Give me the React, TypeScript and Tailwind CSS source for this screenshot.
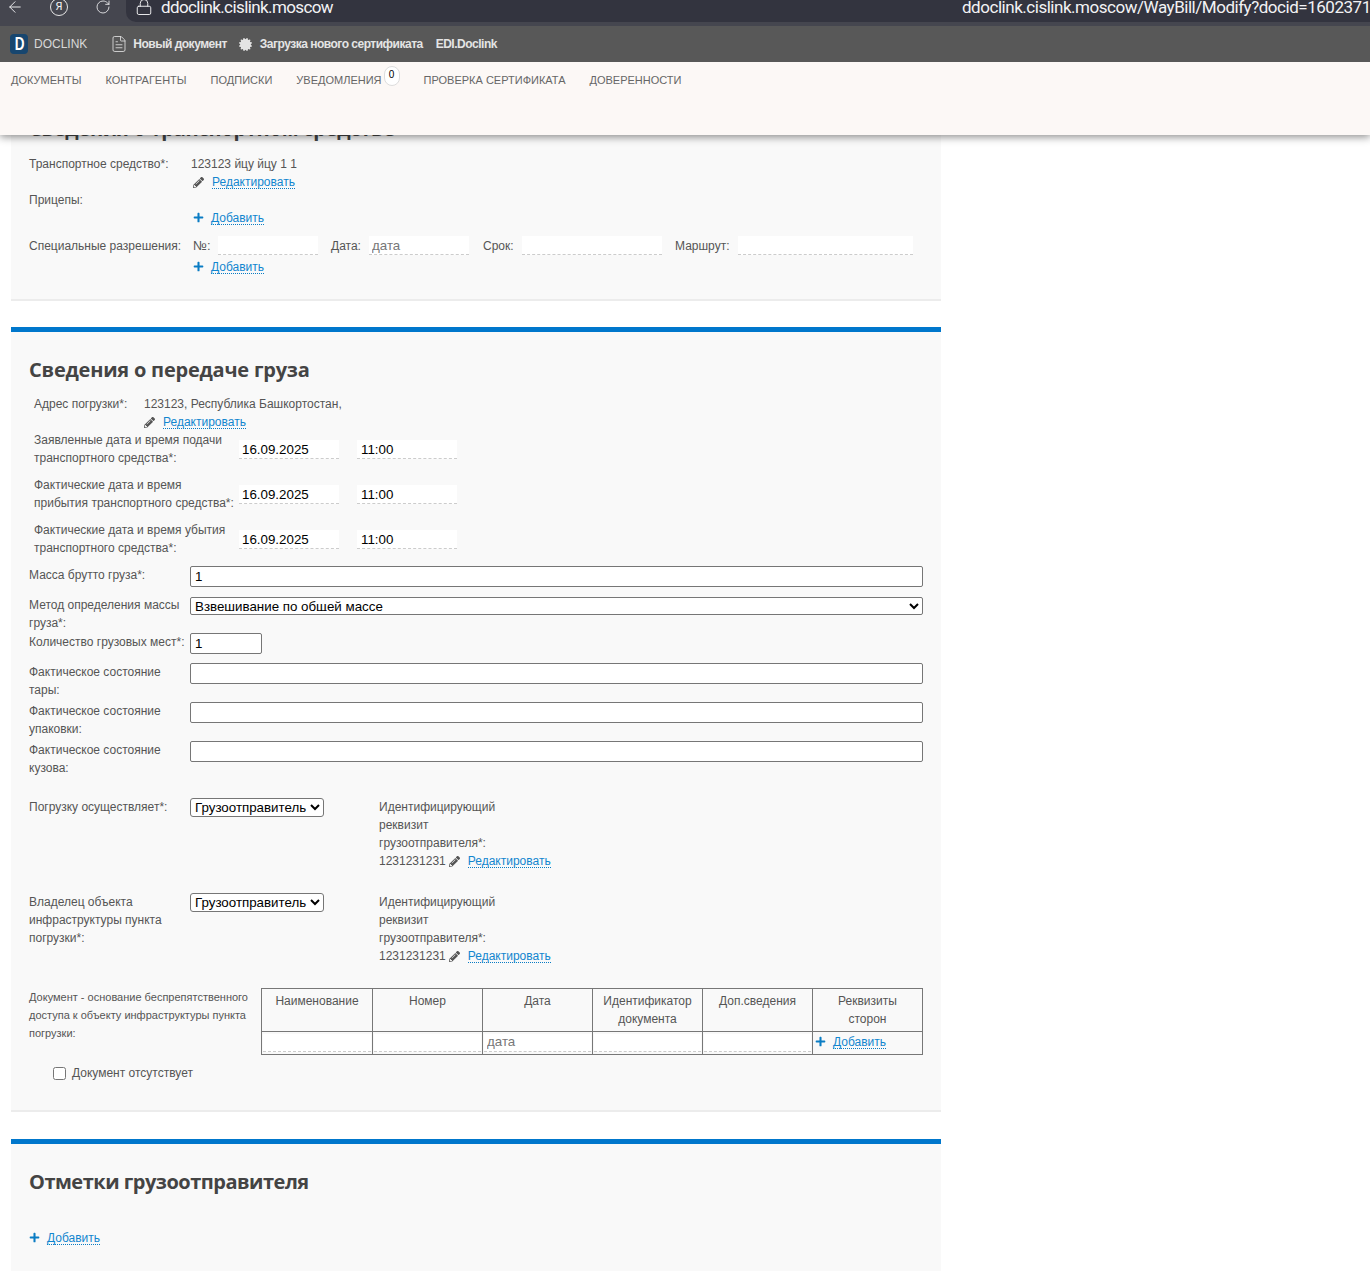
import { ArrowLeft, FileText, Lock, RotateCw } from "lucide-react";
import { FaCertificate, FaPencilAlt, FaPlus } from "react-icons/fa";

const navItems = ["Документы", "Контрагенты", "Подписки", "Уведомления", "Проверка сертификата", "Доверенности"];
const tableHead = ["Наименование", "Номер", "Дата", "Идентификатор документа", "Доп.сведения", "Реквизиты сторон"];

function TextLink({ children }: { children: string }) {
  return (
    <a className="inline-block h-[14px] border-b border-dotted border-[#0a7cc4] leading-[14px] text-[#1286cf]">
      {children}
    </a>
  );
}

function EditLink() {
  return (
    <span className="inline-flex items-center">
      <FaPencilAlt className="h-[11px] w-[11px] text-[#555]" />
      <span className="ml-[8px] flex">
        <TextLink>Редактировать</TextLink>
      </span>
    </span>
  );
}

function AddLink() {
  return (
    <span className="inline-flex items-center">
      <FaPlus className="-mt-[1px] h-[11px] w-[11px] text-[#0a7cc4]" />
      <span className="ml-[7px] flex">
        <TextLink>Добавить</TextLink>
      </span>
    </span>
  );
}

function DashedInput({
  w,
  h = "h-[19px]",
  pad = "px-[3px]",
  value,
  placeholder,
}: {
  w: string;
  h?: string;
  pad?: string;
  value?: string;
  placeholder?: string;
}) {
  return (
    <input
      defaultValue={value}
      placeholder={placeholder}
      className={
        w + " " + h + " " + pad +
        " border-b border-dashed border-[#ccc] bg-white text-[13.33px] text-black placeholder:text-[#777] outline-none"
      }
    />
  );
}

function DateRow({ label }: { label: React.ReactNode }) {
  return (
    <div className="ml-[5px] mt-[9px] flex">
      <div className="w-[205px]">{label}</div>
      <div className="flex gap-[18px] pt-[9px]">
        <DashedInput w="w-[100px]" value="16.09.2025" />
        <DashedInput w="w-[100px]" pad="px-[4px]" value="11:00" />
      </div>
    </div>
  );
}

function Boxed({ w = "w-[733px]", value }: { w?: string; value?: string }) {
  return (
    <input
      defaultValue={value}
      className={w + " h-[21px] rounded-[2px] border border-[#767676] bg-white px-[4px] text-[13.33px] text-black outline-none"}
    />
  );
}

function FieldRow({ mt, label, children }: { mt: string; label: React.ReactNode; children: React.ReactNode }) {
  return (
    <div className={mt + " flex"}>
      <div className="w-[161px]">{label}</div>
      {children}
    </div>
  );
}

function PartyRow({ mt, label }: { mt: string; label: React.ReactNode }) {
  return (
    <div className={mt + " flex"}>
      <div className="w-[161px]">{label}</div>
      <div className="w-[189px]">
        <select className="h-[19px] w-[134px] rounded-[3px] border border-[#767676] bg-white text-[13.33px] text-black">
          <option>Грузоотправитель</option>
        </select>
      </div>
      <div>
        Идентифицирующий
        <br />
        реквизит
        <br />
        грузоотправителя*:
        <div className="flex h-[18px] items-center">
          1231231231
          <span className="ml-[3px] flex">
            <EditLink />
          </span>
        </div>
      </div>
    </div>
  );
}

function Heading({ tracking, children }: { tracking: string; children: string }) {
  return (
    <h2 className={tracking + " h-[28px] font-['Open_Sans',sans-serif] text-[20px] leading-[28px] font-bold text-[#444]"}>
      {children}
    </h2>
  );
}

export default function App() {
  return (
    <div className="h-[1271px] w-full overflow-hidden bg-white font-['Liberation_Sans',Arial,sans-serif] text-[12px] leading-[18px] text-[#555]">
      <header className="relative z-10 h-[135px] shadow-[0_2px_8px_rgba(0,0,0,0.45)]">
        {/* browser chrome, cut off at the top of the capture */}
        <div className="h-[22px] overflow-hidden bg-[#45464f]">
          <div className="-mt-[9px] flex h-[31px] items-center font-['Roboto',sans-serif] text-[17px] text-[#f2f2f4]">
            <ArrowLeft className="ml-[6px] h-[18px] w-[18px]" strokeWidth={1.25} />
            <span className="ml-[26px] flex h-[18px] w-[18px] items-center justify-center rounded-full border border-[#e5e5e5] text-[11px] leading-none">
              Я
            </span>
            <RotateCw className="ml-[27px] h-[16px] w-[16px]" strokeWidth={1.25} />
            <div className="ml-[15px] flex h-full min-w-0 flex-1 items-center rounded-bl-[10px] bg-[#33343f] pl-[9px]">
              <Lock className="h-[18px] w-[18px] shrink-0" strokeWidth={1.25} />
              <span className="ml-[8px] w-[801px] shrink-0 tracking-[-0.6px]">ddoclink.cislink.moscow</span>
              <span className="whitespace-nowrap tracking-[-0.47px]">ddoclink.cislink.moscow/WayBill/Modify?docid=1602371</span>
            </div>
          </div>
        </div>
        <div className="h-[4px] bg-[#45464f]" />
        <div className="flex h-[36px] items-center bg-[#585858] text-[#e4e4e4]">
          <span className="ml-[10px] flex h-[20px] w-[18px] items-center justify-center rounded-[4px] bg-[#17466f] text-[18px] font-bold text-white">
            <span className="scale-x-75">D</span>
          </span>
          <span className="ml-[6px] text-[#d8d8d8]">DOCLINK</span>
          <FileText className="ml-[23px] h-[18px] w-[18px] shrink-0" strokeWidth={1.1} />
          <span className="ml-[5px] font-bold tracking-[-0.5px]">Новый документ</span>
          <FaCertificate className="ml-[12px] h-[13px] w-[13px]" />
          <span className="ml-[8px] font-bold tracking-[-0.5px]">Загрузка нового сертификата</span>
          <span className="ml-[13px] font-bold tracking-[-0.5px]">EDI.Doclink</span>
        </div>
        <nav className="flex h-[73px] items-start bg-[#fcf8f6] pl-[11px] pt-[9px] text-[11px] text-[#666] uppercase">
          {navItems.map((item) => (
            <span key={item} className="mr-[24px] flex h-[18px] items-center">
              {item}
              {item === "Уведомления" && (
                <span className="relative -top-[4px] ml-[2px] flex h-[20px] w-[16px] items-start justify-center rounded-full border border-[#ddd] bg-white text-[10px] leading-[16px] text-black">
                  0
                </span>
              )}
            </span>
          ))}
        </nav>
      </header>

      <section className="ml-[11px] -mt-[49px] h-[215px] w-[930px] border-b-2 border-[#ececec] bg-[#f9f9f9] px-[18px] pt-[29px]">
        <Heading tracking="tracking-[-0.27px]">Сведения о транспортном средстве</Heading>
        <div className="mt-[12px] flex">
          <div className="w-[161px]">Транспортное средство*:</div>
          <div className="pl-[1px]">123123 йцу йцу 1 1</div>
        </div>
        <div className="flex h-[18px] items-center pl-[164px]">
          <EditLink />
        </div>
        <div className="h-[18px]">Прицепы:</div>
        <div className="flex h-[18px] items-center pl-[164px]">
          <AddLink />
        </div>
        <div className="mt-[9px] flex h-[19px] items-center">
          <span className="w-[164px]">Специальные разрешения:</span>
          <span className="w-[25px] text-[13px]">№:</span>
          <DashedInput w="w-[100px]" />
          <span className="ml-[13px] w-[38px]">Дата:</span>
          <DashedInput w="w-[100px]" placeholder="дата" />
          <span className="ml-[14px] w-[39px]">Срок:</span>
          <DashedInput w="w-[140px]" />
          <span className="ml-[13px] w-[63px]">Маршрут:</span>
          <DashedInput w="w-[175px]" />
        </div>
        <div className="mt-[3px] flex h-[18px] items-center pl-[164px]">
          <AddLink />
        </div>
      </section>

      <section className="ml-[11px] mt-[26px] h-[785px] w-[930px] border-t-[5px] border-b-2 border-t-[#0077cc] border-b-[#ececec] bg-[#f9f9f9] px-[18px] pt-[24px]">
        <Heading tracking="tracking-[-0.22px]">Сведения о передаче груза</Heading>
        <div className="ml-[5px] mt-[11px] flex">
          <div className="w-[110px]">Адрес погрузки*:</div>
          <div>
            <div>123123, Республика Башкортостан,</div>
            <div className="flex h-[18px] items-center">
              <EditLink />
            </div>
          </div>
        </div>
        <div className="-mt-[9px]">
          <DateRow
            label={
              <>
                Заявленные дата и время подачи
                <br />
                транспортного средства*:
              </>
            }
          />
          <DateRow
            label={
              <>
                Фактические дата и время
                <br />
                прибытия транспортного средства*:
              </>
            }
          />
          <DateRow
            label={
              <>
                Фактические дата и время убытия
                <br />
                транспортного средства*:
              </>
            }
          />
        </div>

        <FieldRow mt="mt-[9px]" label="Масса брутто груза*:">
          <Boxed value="1" />
        </FieldRow>
        <FieldRow
          mt="mt-[9px]"
          label={
            <>
              Метод определения массы
              <br />
              груза*:
            </>
          }
        >
          <select className="mt-[1px] h-[18px] w-[733px] rounded-[2px] border border-[#767676] bg-white pb-[3px] text-[13.33px] leading-[15px] text-black">
            <option>Взвешивание по общей массе</option>
          </select>
        </FieldRow>
        <FieldRow mt="mt-[1px]" label="Количество грузовых мест*:">
          <Boxed w="w-[72px]" value="1" />
        </FieldRow>
        <FieldRow
          mt="mt-[9px]"
          label={
            <>
              Фактическое состояние
              <br />
              тары:
            </>
          }
        >
          <Boxed />
        </FieldRow>
        <FieldRow
          mt="mt-[3px]"
          label={
            <>
              Фактическое состояние
              <br />
              упаковки:
            </>
          }
        >
          <Boxed />
        </FieldRow>
        <FieldRow
          mt="mt-[3px]"
          label={
            <>
              Фактическое состояние
              <br />
              кузова:
            </>
          }
        >
          <Boxed />
        </FieldRow>

        <PartyRow mt="mt-[21px]" label="Погрузку осуществляет*:" />
        <PartyRow
          mt="mt-[23px]"
          label={
            <>
              Владелец объекта
              <br />
              инфраструктуры пункта
              <br />
              погрузки*:
            </>
          }
        />

        <div className="mt-[23px] flex">
          <div className="w-[232px] shrink-0 text-[11px]">
            Документ - основание беспрепятственного
            <br />
            доступа к объекту инфраструктуры пункта
            <br />
            погрузки:
          </div>
          <table className="h-[67px] w-[661px] shrink-0 table-fixed border-collapse border border-[#777]">
            <colgroup>
              <col className="w-[111px]" />
              <col className="w-[110px]" />
              <col className="w-[110px]" />
              <col className="w-[110px]" />
              <col className="w-[110px]" />
              <col className="w-[110px]" />
            </colgroup>
            <thead>
              <tr className="h-[43px]">
                {tableHead.map((h) => (
                  <th key={h} className="border border-[#777] px-[8px] pt-[3px] align-top font-normal">
                    {h}
                  </th>
                ))}
              </tr>
            </thead>
            <tbody>
              <tr className="h-[23px]">
                {[0, 1, 2, 3, 4].map((i) => (
                  <td key={i} className="border border-[#777] px-[1px] pt-[1px] align-top">
                    <DashedInput w="w-full" h="h-[18px]" placeholder={i === 2 ? "дата" : undefined} />
                  </td>
                ))}
                <td className="border border-[#777] pl-[2px]">
                  <AddLink />
                </td>
              </tr>
            </tbody>
          </table>
        </div>
        <label className="ml-[24px] mt-[9px] flex h-[18px] items-center">
          <input type="checkbox" className="m-0 h-[13px] w-[13px]" />
          <span className="ml-[6px]">Документ отсутствует</span>
        </label>
      </section>

      <section className="ml-[11px] mt-[27px] h-[200px] w-[930px] border-t-[5px] border-t-[#0077cc] bg-[#f9f9f9] px-[18px] pt-[24px]">
        <Heading tracking="tracking-[-0.5px]">Отметки грузоотправителя</Heading>
        <div className="mt-[33px] flex h-[18px] items-center">
          <AddLink />
        </div>
      </section>
    </div>
  );
}
